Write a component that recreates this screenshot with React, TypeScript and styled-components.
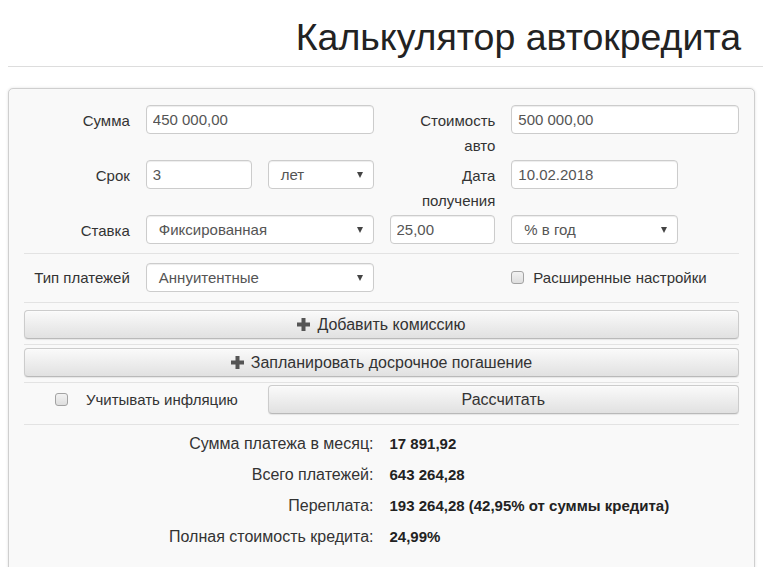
import React from 'react';
import styled, { createGlobalStyle } from 'styled-components';

const GlobalStyle = createGlobalStyle`
    html, body {
        margin: 0;
        padding: 0;
        background: #fff;
    }
    body {
        font-family: "Liberation Sans", Arial, sans-serif;
        font-size: 15px;
        color: #333;
    }
    * {
        box-sizing: border-box;
    }
`;

const Page = styled.div`
    padding-left: 8px;
    padding-bottom: 20px;
`;

const Header = styled.div`
    border-bottom: 1px solid #ddd;
    padding: 17px 22px 9px 0;
    text-align: right;
`;

const Title = styled.h1`
    margin: 0;
    font-size: 37.5px;
    line-height: 40px;
    font-weight: normal;
    color: #222;
`;

const Panel = styled.div`
    width: 747px;
    margin-top: 21px;
    background: #f9f9f9;
    border: 1px solid #cfcfcf;
    border-radius: 5px;
    box-shadow: 0 0 3px rgba(0, 0, 0, 0.12);
    padding: 16px 15px 40px;
`;

const Grid = styled.div`
    display: grid;
    grid-template-columns: repeat(12, 1fr);
    column-gap: 16px;
`;

const FormGrid = styled(Grid)`
    grid-template-rows: repeat(3, 29px);
    row-gap: 26px;
    margin-bottom: 9px;
`;

const Row = styled(Grid)<{ $top: number; $bottom: number }>`
    height: 29px;
    align-items: center;
    margin: ${({ $top, $bottom }) => `${$top}px 0 ${$bottom}px`};
`;

const Label = styled.label<{ $align?: string }>`
    grid-column: span 2;
    align-self: ${({ $align }) => $align || 'start'};
    text-align: right;
    padding-top: ${({ $align }) => ($align ? '0' : '3px')};
    line-height: 25px;
    color: #333;
`;

const Input = styled.input<{ $span: number }>`
    grid-column: span ${({ $span }) => $span};
    width: 100%;
    height: 29px;
    border: 1px solid #ccc;
    border-radius: 4px;
    background: #fff;
    padding: 0 6px;
    font-family: inherit;
    font-size: 15px;
    color: #555;
    box-shadow: inset 0 1px 1px rgba(0, 0, 0, 0.075);
    outline: none;
`;

const Select = styled.div<{ $span: number }>`
    grid-column: span ${({ $span }) => $span};
    height: 29px;
    border: 1px solid #ccc;
    border-radius: 4px;
    background: #fff;
    padding: 0 10px 0 12px;
    display: flex;
    align-items: center;
    justify-content: space-between;
    color: #555;
    box-shadow: inset 0 1px 1px rgba(0, 0, 0, 0.075);
`;

const Arrow = styled.span`
    width: 0;
    height: 0;
    border-left: 3.5px solid transparent;
    border-right: 3.5px solid transparent;
    border-top: 6px solid #444;
`;

const Spacer = styled.div<{ $span: number }>`
    grid-column: span ${({ $span }) => $span};
`;

const Divider = styled.div`
    height: 1px;
    background: #e3e3e3;
`;

const CheckLabel = styled.label<{ $span: number; $pad: number; $gap: number }>`
    grid-column: span ${({ $span }) => $span};
    display: flex;
    align-items: center;
    gap: ${({ $gap }) => $gap}px;
    padding-left: ${({ $pad }) => $pad}px;
    color: #333;
`;

const Check = styled.span`
    width: 13px;
    height: 13px;
    border: 1px solid #a3a3a3;
    border-radius: 3px;
    background: linear-gradient(#f2f2f2, #dedede);
    flex-shrink: 0;
`;

const Button = styled.button<{ $span?: number; $top?: number; $bottom?: number }>`
    grid-column: span ${({ $span }) => $span || 12};
    display: flex;
    width: 100%;
    height: 29px;
    align-items: center;
    justify-content: center;
    gap: 7px;
    margin: ${({ $top, $bottom }) => `${$top || 0}px 0 ${$bottom || 0}px`};
    padding: 0 12px;
    border: 1px solid #ccc;
    border-bottom-color: #b9b9b9;
    border-radius: 4px;
    background: linear-gradient(to bottom, #fafafa 0%, #e1e1e1 100%);
    box-shadow: inset 0 1px 0 rgba(255, 255, 255, 0.4), 0 1px 1px rgba(0, 0, 0, 0.08);
    font-family: inherit;
    font-size: 16px;
    color: #333;
    cursor: pointer;
`;

const Results = styled(Grid)`
    row-gap: 11px;
    margin-top: 9px;
    line-height: 20px;
`;

const ResultLabel = styled.div`
    grid-column: span 6;
    text-align: right;
    font-size: 16px;
    color: #333;
`;

const ResultValue = styled.div`
    grid-column: span 6;
    font-weight: bold;
    font-size: 15px;
    color: #222;
`;

const PlusIcon = () => (
    <svg width="13" height="13" viewBox="0 0 13 13">
        <rect x="4.5" y="0" width="4" height="13" fill="#555" />
        <rect x="0" y="4.5" width="13" height="4" fill="#555" />
    </svg>
);

const results = [
    { label: 'Сумма платежа в месяц:', value: '17 891,92' },
    { label: 'Всего платежей:', value: '643 264,28' },
    { label: 'Переплата:', value: '193 264,28 (42,95% от суммы кредита)' },
    { label: 'Полная стоимость кредита:', value: '24,99%' },
];

const App = () => {
    return (
        <Page>
            <GlobalStyle />
            <Header>
                <Title>Калькулятор автокредита</Title>
            </Header>
            <Panel>
                <FormGrid>
                    <Label>Сумма</Label>
                    <Input $span={4} readOnly defaultValue="450 000,00" />
                    <Label>Стоимость авто</Label>
                    <Input $span={4} readOnly defaultValue="500 000,00" />

                    <Label>Срок</Label>
                    <Input $span={2} readOnly defaultValue="3" />
                    <Select $span={2}>лет<Arrow /></Select>
                    <Label>Дата получения</Label>
                    <Input $span={3} readOnly defaultValue="10.02.2018" />
                    <Spacer $span={1} />

                    <Label>Ставка</Label>
                    <Select $span={4}>Фиксированная<Arrow /></Select>
                    <Input $span={2} readOnly defaultValue="25,00" />
                    <Select $span={3}>% в год<Arrow /></Select>
                </FormGrid>
                <Divider />
                <Row $top={9} $bottom={10}>
                    <Label $align="center">Тип платежей</Label>
                    <Select $span={4}>Аннуитентные<Arrow /></Select>
                    <Spacer $span={2} />
                    <CheckLabel $span={4} $pad={0} $gap={9}>
                        <Check />
                        Расширенные настройки
                    </CheckLabel>
                </Row>
                <Divider />
                <Button $top={7} $bottom={5}><PlusIcon />Добавить комиссию</Button>
                <Divider />
                <Button $top={3} $bottom={5}><PlusIcon />Запланировать досрочное погашение</Button>
                <Divider />
                <Row $top={2} $bottom={10}>
                    <CheckLabel $span={4} $pad={31} $gap={18}>
                        <Check />
                        Учитывать инфляцию
                    </CheckLabel>
                    <Button $span={8}>Рассчитать</Button>
                </Row>
                <Divider />
                <Results>
                    {results.map((r, i) => (
                        <React.Fragment key={i}>
                            <ResultLabel>{r.label}</ResultLabel>
                            <ResultValue>{r.value}</ResultValue>
                        </React.Fragment>
                    ))}
                </Results>
            </Panel>
        </Page>
    );
};

export default App;
